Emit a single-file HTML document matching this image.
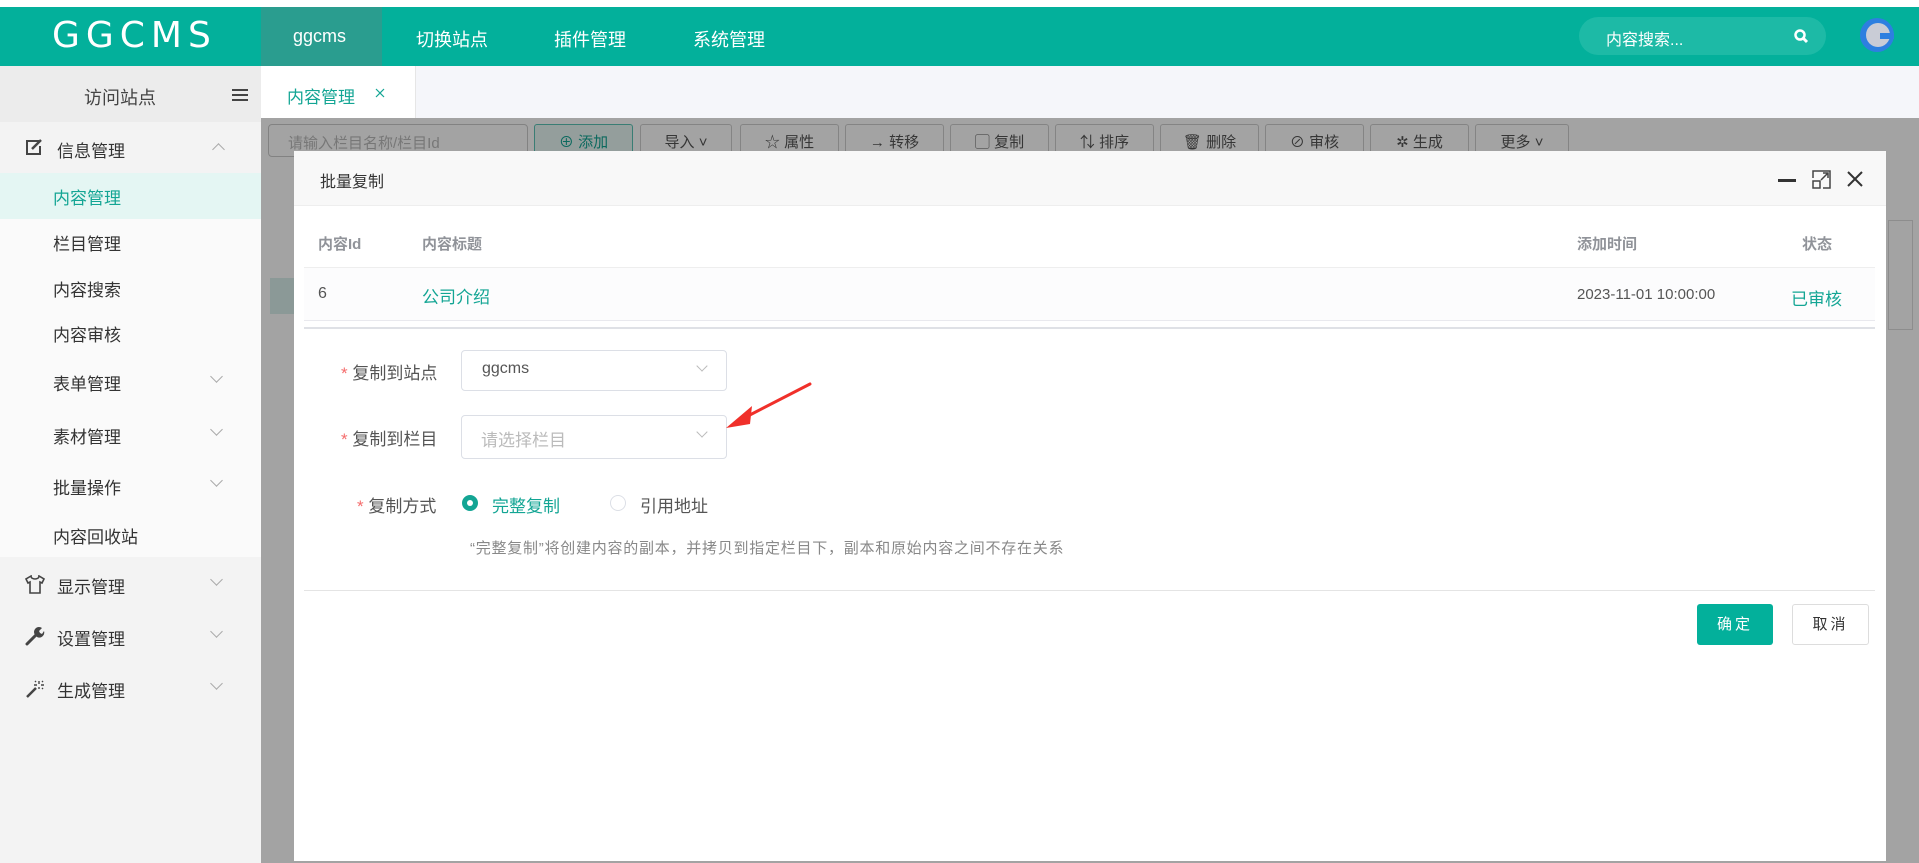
<!DOCTYPE html>
<html><head><meta charset="utf-8"><style>
*{margin:0;padding:0;box-sizing:border-box}
body{width:1919px;height:863px;overflow:hidden;background:#fff;font-family:"Liberation Sans","Noto Sans CJK SC",sans-serif;position:relative;color:#333}
.a{position:absolute}
.hdr{left:0;top:7px;width:1919px;height:59px;background:#03b09b}
.t{position:absolute;white-space:nowrap}
.side{left:0;top:66px;width:261px;height:797px;background:#f3f3f3}
.mi{position:absolute;left:0;width:261px;font-size:17px;color:#333}
.chev{position:absolute;right:38px;width:9px;height:9px;border-right:1px solid #aaa;border-bottom:1px solid #aaa;transform:rotate(45deg)}
.btn{position:absolute;top:124px;height:33px;border:1px solid #cfcfcf;border-radius:3px;background:#fff;font-size:15px;color:#555;padding:6px 0;text-align:center}
.ck{position:absolute;top:6px;width:8px;height:8px;border-right:1px solid #bbb;border-bottom:1px solid #bbb;transform:rotate(45deg)}
</style></head><body>
<div class="a hdr"></div>
<div class="t" style="left:52px;top:15px;font-size:36px;color:#fff;letter-spacing:6px;font-family:'DejaVu Sans',sans-serif">GGCMS</div>
<div class="a" style="left:261px;top:7px;width:121px;height:59px;background:#2a9d8f"></div>
<div class="t" style="left:293px;top:26px;font-size:18px;color:#fff">ggcms</div>
<div class="t" style="left:416px;top:26px;font-size:18px;color:#fff">切换站点</div>
<div class="t" style="left:554px;top:26px;font-size:18px;color:#fff">插件管理</div>
<div class="t" style="left:693px;top:26px;font-size:18px;color:#fff">系统管理</div>
<div class="a" style="left:1579px;top:17px;width:247px;height:38px;border-radius:19px;background:#1dbaa6"></div>
<div class="t" style="left:1606px;top:26px;font-size:16px;color:#fff">内容搜索...</div>
<svg class="a" style="left:1793px;top:28px" width="16" height="16" viewBox="0 0 16 16"><circle cx="7" cy="7" r="4.5" fill="none" stroke="#fff" stroke-width="2.5"/><path d="M10 10l4 4" stroke="#fff" stroke-width="3"/></svg>
<svg class="a" style="left:1858px;top:16px" width="38" height="38" viewBox="0 0 38 38"><circle cx="19" cy="19" r="17" fill="#2d7fe0"/><circle cx="20" cy="19" r="12" fill="#c9ccd6"/><path d="M22 17h14v6H22z" fill="#2d7fe0"/></svg>

<div class="a side"></div>
<div class="a" style="left:0;top:66px;width:261px;height:56px;background:#ececec"></div>
<div class="t" style="left:84px;top:84px;font-size:18px;color:#444">访问站点</div>
<div class="a" style="left:232px;top:89px;width:16px;height:2px;background:#444;box-shadow:0 5px 0 #444,0 10px 0 #444"></div>
<div class="a" style="left:0;top:173px;width:261px;height:384px;background:#fafafa"></div>
<div class="a" style="left:0;top:173px;width:261px;height:46px;background:#e4f6f3"></div>
<svg class="a" style="left:25px;top:138px" width="18" height="18" viewBox="0 0 18 18"><path d="M14 3H2v13h13V8" fill="none" stroke="#444" stroke-width="2"/><path d="M7 11l9-9" stroke="#444" stroke-width="2.5"/></svg>
<div class="mi t" style="left:57px;top:137px;width:auto">信息管理</div>
<div class="chev" style="left:214px;top:145px;transform:rotate(225deg)"></div>
<div class="mi t" style="left:53px;top:184px;width:auto;color:#13a594">内容管理</div>
<div class="mi t" style="left:53px;top:230px;width:auto">栏目管理</div>
<div class="mi t" style="left:53px;top:276px;width:auto">内容搜索</div>
<div class="mi t" style="left:53px;top:321px;width:auto">内容审核</div>
<div class="mi t" style="left:53px;top:370px;width:auto">表单管理</div><div class="chev" style="left:212px;top:372px"></div>
<div class="mi t" style="left:53px;top:423px;width:auto">素材管理</div><div class="chev" style="left:212px;top:425px"></div>
<div class="mi t" style="left:53px;top:474px;width:auto">批量操作</div><div class="chev" style="left:212px;top:476px"></div>
<div class="mi t" style="left:53px;top:523px;width:auto">内容回收站</div>
<svg class="a" style="left:25px;top:575px" width="20" height="19" viewBox="0 0 20 19"><path d="M6 1L1 4l2 4 2-1v11h10V7l2 1 2-4-5-3c0 2-2 3-4 3S6 3 6 1z" fill="none" stroke="#444" stroke-width="1.6"/></svg>
<div class="mi t" style="left:57px;top:573px;width:auto">显示管理</div><div class="chev" style="left:212px;top:575px"></div>
<svg class="a" style="left:25px;top:626px" width="20" height="20" viewBox="0 0 20 20"><path d="M2 18l9-9" stroke="#444" stroke-width="3" stroke-linecap="round"/><path d="M10 9a5 5 0 0 1 7-7l-3 3 1 2 2 1 2-3a5 5 0 0 1-7 6z" fill="#444"/></svg>
<div class="mi t" style="left:57px;top:625px;width:auto">设置管理</div><div class="chev" style="left:212px;top:627px"></div>
<svg class="a" style="left:25px;top:679px" width="22" height="20" viewBox="0 0 22 20"><path d="M2 18l9-9" stroke="#444" stroke-width="2.5"/><path d="M14 2v3M12 6h-3M16 6h3M14 8v2M10 2l1 1M18 2l-1 1M18 10l-1-1" stroke="#444" stroke-width="1.4"/></svg>
<div class="mi t" style="left:57px;top:677px;width:auto">生成管理</div><div class="chev" style="left:212px;top:679px"></div>

<div class="a" style="left:261px;top:66px;width:1658px;height:52px;background:#f5f6fa"></div>
<div class="a" style="left:261px;top:66px;width:155px;height:52px;background:#fff;border-right:1px solid #e6e6e6"></div>
<div class="t" style="left:287px;top:83px;font-size:17px;color:#13a594">内容管理</div>
<svg class="a" style="left:375px;top:88px" width="10" height="10" viewBox="0 0 10 10"><path d="M1 1l8 8M9 1L1 9" stroke="#13a594" stroke-width="1.2"/></svg>

<!-- content under mask -->
<div class="a" style="left:268px;top:124px;width:260px;height:33px;border:1px solid #ccc;border-radius:4px"></div>
<div class="t" style="left:288px;top:132px;font-size:15px;color:#bbb">请输入栏目名称/栏目Id</div>
<div class="btn" style="left:534px;width:99px;border-color:#5cc4b6;background:#e8f7f5;color:#13a594">⊕ 添加</div>
<div class="btn" style="left:640px;width:92px">导入 ˅</div>
<div class="btn" style="left:740px;width:99px">☆ 属性</div>
<div class="btn" style="left:845px;width:99px">→ 转移</div>
<div class="btn" style="left:950px;width:99px">▢ 复制</div>
<div class="btn" style="left:1055px;width:99px">⇅ 排序</div>
<div class="btn" style="left:1160px;width:99px">🗑 删除</div>
<div class="btn" style="left:1265px;width:99px">⊘ 审核</div>
<div class="btn" style="left:1370px;width:99px">✲ 生成</div>
<div class="btn" style="left:1475px;width:94px">更多 ˅</div>
<div class="a" style="left:1888px;top:220px;width:25px;height:110px;border:1px solid #ddd"></div>
<div class="a" style="left:270px;top:278px;width:30px;height:36px;background:#d9f0ec"></div>
<div class="a" style="left:261px;top:118px;width:1658px;height:745px;background:rgba(0,0,0,.36)"></div>

<!-- dialog -->
<div class="a" style="left:294px;top:151px;width:1592px;height:710px;background:#fff"></div>
<div class="a" style="left:294px;top:151px;width:1592px;height:55px;background:#f8f8f8;border-bottom:1px solid #eee"></div>
<div class="t" style="left:320px;top:168px;font-size:16px;color:#333">批量复制</div>
<div class="a" style="left:1778px;top:179px;width:18px;height:3px;background:#333"></div>
<svg class="a" style="left:1812px;top:170px" width="19" height="19" viewBox="0 0 19 19"><path d="M1 8V1h17v17h-7" fill="none" stroke="#444" stroke-width="1.5"/><rect x="1" y="11" width="7" height="7" fill="none" stroke="#444" stroke-width="1.5"/><path d="M9 10l7-7M11 3h5v5" fill="none" stroke="#444" stroke-width="1.5"/></svg>
<svg class="a" style="left:1847px;top:171px" width="16" height="16" viewBox="0 0 16 16"><path d="M1 1l14 14M15 1L1 15" stroke="#333" stroke-width="2"/></svg>

<div class="a" style="left:304px;top:267px;width:1571px;height:1px;background:#eee"></div>
<div class="a" style="left:304px;top:268px;width:1571px;height:52px;background:#fcfcfd"></div>
<div class="a" style="left:304px;top:320px;width:1571px;height:1px;background:#e9e9ee"></div>
<div class="a" style="left:304px;top:327px;width:1571px;height:2px;background:#dfe1e6"></div>
<div class="t" style="left:318px;top:233px;font-size:15px;color:#909399;font-weight:bold">内容Id</div>
<div class="t" style="left:422px;top:233px;font-size:15px;color:#909399;font-weight:bold">内容标题</div>
<div class="t" style="left:1577px;top:233px;font-size:15px;color:#909399;font-weight:bold">添加时间</div>
<div class="t" style="left:1802px;top:233px;font-size:15px;color:#909399;font-weight:bold">状态</div>
<div class="t" style="left:318px;top:285px;font-size:16px;color:#555">6</div>
<div class="t" style="left:422px;top:283px;font-size:17px;color:#13a594">公司介绍</div>
<div class="t" style="left:1577px;top:286px;font-size:15px;color:#555">2023-11-01 10:00:00</div>
<div class="t" style="left:1791px;top:285px;font-size:17px;color:#13a594">已审核</div>

<div class="t" style="left:341px;top:359px;font-size:17px;color:#555"><span style="color:#f56c6c">* </span>复制到站点</div>
<div class="a" style="left:461px;top:350px;width:266px;height:41px;border:1px solid #dcdfe6;border-radius:4px"></div>
<div class="t" style="left:482px;top:360px;font-size:16px;color:#555">ggcms</div>
<div class="ck" style="left:698px;top:362px;border-color:#bbb"></div>
<div class="t" style="left:341px;top:425px;font-size:17px;color:#555"><span style="color:#f56c6c">* </span>复制到栏目</div>
<div class="a" style="left:461px;top:415px;width:266px;height:44px;border:1px solid #dcdfe6;border-radius:4px"></div>
<div class="t" style="left:481px;top:426px;font-size:17px;color:#bbb">请选择栏目</div>
<div class="ck" style="left:698px;top:428px;border-color:#bbb"></div>
<svg class="a" style="left:720px;top:380px" width="96" height="52" viewBox="0 0 96 52"><path d="M90 4L24 38" stroke="#f0302a" stroke-width="3" stroke-linecap="round"/><path d="M6 48l26-22-2 18z" fill="#f0302a"/></svg>
<div class="t" style="left:357px;top:492px;font-size:17px;color:#555"><span style="color:#f56c6c">* </span>复制方式</div>
<div class="a" style="left:462px;top:495px;width:16px;height:16px;border-radius:50%;background:#13a594"></div>
<div class="a" style="left:467px;top:500px;width:6px;height:6px;border-radius:50%;background:#fff"></div>
<div class="t" style="left:492px;top:492px;font-size:17px;color:#13a594">完整复制</div>
<div class="a" style="left:610px;top:495px;width:16px;height:16px;border-radius:50%;border:1px solid #dcdfe6"></div>
<div class="t" style="left:640px;top:492px;font-size:17px;color:#555">引用地址</div>
<div class="t" style="left:470px;top:537px;font-size:15px;letter-spacing:0.75px;color:#888">“完整复制”将创建内容的副本，并拷贝到指定栏目下，副本和原始内容之间不存在关系</div>
<div class="a" style="left:304px;top:590px;width:1571px;height:1px;background:#e4e4e4"></div>
<div class="a" style="left:1697px;top:604px;width:76px;height:41px;background:#03b09b;border-radius:3px;color:#fff;font-size:15px;text-align:center;line-height:41px;letter-spacing:3px">确定</div>
<div class="a" style="left:1792px;top:604px;width:77px;height:41px;border:1px solid #ddd;border-radius:3px;color:#333;font-size:15px;text-align:center;line-height:39px;letter-spacing:3px">取消</div>
</body></html>
